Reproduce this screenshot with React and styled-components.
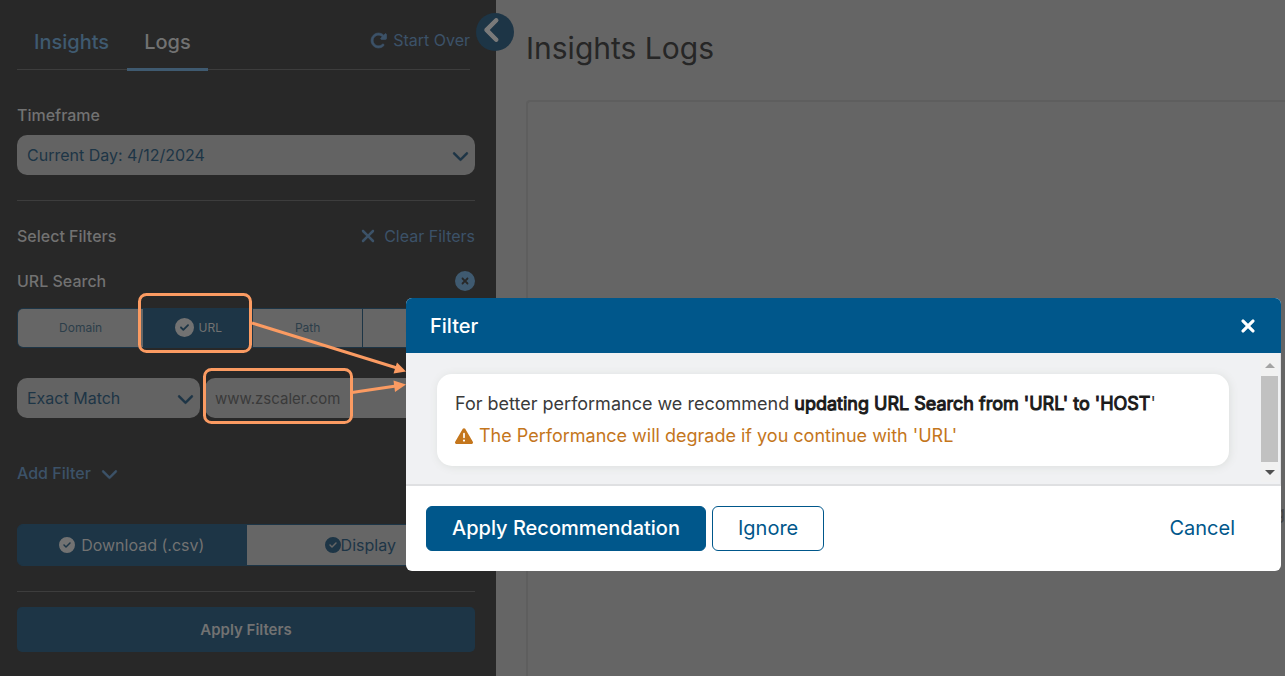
import React, { useState } from 'react';
import styled, { createGlobalStyle } from 'styled-components';
import {
  FaChevronDown,
  FaChevronLeft,
  FaCircleCheck,
  FaCircleXmark,
  FaRotateRight,
  FaTriangleExclamation,
  FaXmark,
} from 'react-icons/fa6';

const GlobalStyle = createGlobalStyle`
  * {
    box-sizing: border-box;
  }
  body {
    margin: 0;
    font-family: Inter, "Liberation Sans", sans-serif;
    background: #656565;
  }
  button, input, select {
    font: inherit;
    margin: 0;
  }
  button {
    cursor: pointer;
  }
`;

const Page = styled.div`
  position: relative;
  display: flex;
  min-height: 100vh;
  overflow: hidden;
`;

const Sidebar = styled.aside`
  position: relative;
  flex: 0 0 496px;
  padding: 0 21px 24px 17px;
  background: #282828;
  color: #727272;
  font-size: 16px;
`;

const Header = styled.header`
  display: flex;
  align-items: flex-end;
  justify-content: space-between;
  height: 70px;
  margin-right: 5px;
  border-bottom: 1px solid #3d3d3d;
`;

const Tabs = styled.nav`
  display: flex;
  gap: 1px;
  margin-bottom: -2px;
`;

const Tab = styled.button`
  height: 44px;
  padding: 0 17px 10px;
  border: 0;
  border-bottom: 3px solid ${({ $active }) => ($active ? '#3f5a70' : 'transparent')};
  background: none;
  color: ${({ $active }) => ($active ? '#727272' : '#3f5a70')};
  font-size: 20px;
  font-weight: 500;
  line-height: 31px;
`;

const TextButton = styled.button`
  display: flex;
  align-items: center;
  gap: 6px;
  padding: 0;
  border: 0;
  background: none;
  color: #3c5268;
  font-size: 16px;
  font-weight: ${({ $strong }) => ($strong ? 500 : 400)};
  line-height: 20px;
`;

const StartOver = styled(TextButton)`
  margin-bottom: 19px;
`;

const CollapseButton = styled.button`
  position: absolute;
  top: 13px;
  right: -18px;
  display: flex;
  align-items: center;
  justify-content: center;
  width: 38px;
  height: 38px;
  padding: 0 4px 4px 0;
  border: 0;
  border-radius: 50%;
  background: #1d3546;
  color: #7a7a7a;
`;

const BoldChevronLeft = styled(FaChevronLeft)`
  stroke: currentColor;
  stroke-width: 24px;
`;

const BoldRotate = styled(FaRotateRight)`
  stroke: currentColor;
  stroke-width: 20px;
`;

const BoldChevron = styled(FaChevronDown)`
  stroke: currentColor;
  stroke-width: 10px;
`;

const BoldX = styled(FaXmark)`
  stroke: currentColor;
  stroke-width: 20px;
`;

const Field = styled.div`
  display: flex;
  flex-direction: column;
  gap: 10px;
  margin-top: 35px;
`;

const Label = styled.label`
  font-weight: 500;
  line-height: 20px;
`;

const SelectBox = styled.div`
  display: grid;
  flex: ${({ $flex }) => $flex || 'none'};
  align-items: center;
  height: 40px;
  border-radius: 10px;
  background: #636363;
  color: #1d3546;
  & > * {
    grid-area: 1 / 1;
  }
  & svg {
    justify-self: end;
    margin-right: 6px;
    pointer-events: none;
  }
`;

const Select = styled.select`
  width: 100%;
  height: 40px;
  padding: 0 10px;
  border: 0;
  background: none;
  color: inherit;
  appearance: none;
`;

const TextInput = styled.input`
  flex: 1;
  min-width: 0;
  height: 40px;
  padding: 0 10px;
  border: 0;
  border-radius: 10px;
  background: #636363;
  color: #3a3a3a;
  font-size: 15px;
`;

const Divider = styled.hr`
  width: 100%;
  height: 1px;
  margin: ${({ $top }) => $top}px 0 0;
  border: 0;
  background: #3d3d3d;
`;

const Row = styled.div`
  display: flex;
  align-items: center;
  justify-content: space-between;
  gap: 5px;
  margin-top: ${({ $top }) => $top}px;
`;

const Heading = styled.h2`
  margin: 0;
  font-size: 16px;
  font-weight: 500;
  line-height: 20px;
`;

const RoundButton = styled.button`
  display: flex;
  padding: 0;
  border: 0;
  border-radius: 50%;
  background: none;
  color: #3f5a70;
`;

const Segments = styled.div`
  display: flex;
  height: ${({ $height }) => $height}px;
  margin-top: ${({ $top }) => $top}px;
  overflow: hidden;
  border: 1px solid #1d3546;
  border-radius: 6px;
  background: #1d3546;
  font-size: ${({ $size }) => $size}px;
`;

const Segment = styled.button`
  display: flex;
  flex: ${({ $grow }) => $grow || 1} 1 0;
  align-items: center;
  justify-content: center;
  gap: ${({ $gap }) => $gap || 0}px;
  padding: 0;
  border: 0;
  background: ${({ $active }) => ($active ? '#1d3546' : '#666')};
  color: ${({ $active }) => ($active ? '#727272' : '#1d3546')};
  & + & {
    border-left: 1px solid #1d3546;
  }
`;

const PartSegment = styled(Segment)`
  padding-bottom: 2px;
  color: ${({ $active }) => ($active ? '#727272' : '#2c3e4a')};
`;

const AddFilter = styled(TextButton)`
  gap: 10px;
  margin-top: 45px;
`;

const ApplyButton = styled.button`
  width: 100%;
  height: 45px;
  margin-top: 15px;
  border: 0;
  border-radius: 5px;
  background: #1d3546;
  color: #727272;
  font-size: 15px;
  font-weight: 600;
`;

const Main = styled.main`
  display: flex;
  flex: 1;
  flex-direction: column;
  min-width: 0;
  padding-left: 30px;
  background: #656565;
  color: #262626;
`;

const Title = styled.h1`
  margin: 28px 0 32px;
  font-size: 30px;
  font-weight: 400;
  line-height: 40px;
`;

const Panel = styled.section`
  display: flex;
  flex: 1;
  justify-content: flex-end;
  padding-top: 400px;
  border: 2px solid #5e5e5e;
  border-width: 2px 0 0 2px;
  border-radius: 4px 0 0 0;
  color: #444;
  font-size: 18px;
`;

const Annotations = styled.svg`
  position: absolute;
  top: 0;
  left: 0;
  pointer-events: none;
`;

const Dialog = styled.section`
  position: absolute;
  top: 298px;
  right: 4px;
  left: 406px;
  overflow: hidden;
  border-radius: 6px;
  background: #fff;
`;

const DialogHeader = styled.header`
  display: flex;
  align-items: center;
  justify-content: space-between;
  height: 55px;
  padding: 0 23px 0 24px;
  background: #00578b;
  color: #fff;
`;

const DialogTitle = styled.h2`
  margin: 0;
  font-size: 20px;
  font-weight: 500;
`;

const CloseButton = styled.button`
  display: flex;
  padding: 0;
  border: 0;
  background: none;
  color: #fff;
`;

const DialogBody = styled.div`
  display: flex;
  padding: 4px 2px 2px 1px;
  border: 1px solid #dfe0e2;
  border-width: 0 1px 2px 0;
  background: #f0f1f3;
`;

const Card = styled.div`
  flex: 1;
  margin: 17px 32px 16px 30px;
  padding: 14px 18px;
  border-radius: 15px;
  background: #fff;
  box-shadow: 1px 1px 8px #dcdfdd;
  color: #3a3a3a;
  font-size: 18px;
  line-height: 32px;
  & p {
    margin: 0;
  }
  & strong {
    color: #1a1a1a;
    font-weight: 400;
    -webkit-text-stroke: 1px #1a1a1a;
  }
`;

const Warning = styled.p`
  display: flex;
  align-items: center;
  gap: 6px;
  color: #c4761c;
`;

const ScrollTrack = styled.div`
  display: flex;
  flex: 0 0 17px;
  flex-direction: column;
  align-items: center;
  gap: 8px;
  padding: 6px 0 7px;
  background: #f1f1f1;
`;

const ScrollArrow = styled.span`
  border: 5px solid transparent;
  border-width: ${({ $down }) => ($down ? '5px 5px 0' : '0 5px 5px')};
  border-top-color: #505050;
  border-bottom-color: #a3a3a3;
`;

const ScrollThumb = styled.span`
  flex: 1;
  width: 100%;
  background: #c1c1c1;
`;

const DialogFooter = styled.footer`
  display: flex;
  align-items: center;
  gap: 6px;
  padding: 20px;
`;

const DialogButton = styled.button`
  height: 45px;
  padding: 0 25px 2px;
  border: 1px solid #00578b;
  border-radius: 6px;
  background: ${({ $primary }) => ($primary ? '#00578b' : '#fff')};
  color: ${({ $primary }) => ($primary ? '#fff' : '#00578b')};
  font-size: 20px;
  font-weight: ${({ $primary }) => ($primary ? 500 : 400)};
`;

const CancelButton = styled(DialogButton)`
  margin-left: auto;
  border-color: transparent;
`;

const SEARCH_PARTS = [
  { name: 'Domain', grow: 126 },
  { name: 'URL', grow: 109 },
  { name: 'Path', grow: 109 },
  { name: 'Host', grow: 112 },
];

const FilterDialog = () => (
  <Dialog role="dialog" aria-labelledby="dialog-title">
    <DialogHeader>
      <DialogTitle id="dialog-title">Filter</DialogTitle>
      <CloseButton aria-label="Close">
        <BoldX size={20} />
      </CloseButton>
    </DialogHeader>
    <DialogBody>
      <Card>
        <p>
          For better performance we recommend{' '}
          <strong>updating URL Search from 'URL' to 'HOST</strong>'
        </p>
        <Warning>
          <FaTriangleExclamation size={18} />
          The Performance will degrade if you continue with 'URL'
        </Warning>
      </Card>
      <ScrollTrack aria-hidden="true">
        <ScrollArrow />
        <ScrollThumb />
        <ScrollArrow $down />
      </ScrollTrack>
    </DialogBody>
    <DialogFooter>
      <DialogButton $primary>Apply Recommendation</DialogButton>
      <DialogButton>Ignore</DialogButton>
      <CancelButton>Cancel</CancelButton>
    </DialogFooter>
  </Dialog>
);

const Callouts = () => (
  <Annotations width="407" height="430" aria-hidden="true">
    <g fill="none" stroke="#fb9b62" strokeWidth="3">
      <rect x="139.5" y="294.5" width="111" height="57" rx="7" />
      <rect x="204.5" y="369.5" width="147" height="53" rx="7" />
      <path d="M252 323L397 368" />
      <path d="M352 392.5L396 386" />
    </g>
    <g fill="#fb9b62">
      <path d="M406 371.5L393.5 373.5L397 362.5Z" />
      <path d="M406 384.5L393.5 380.5L395 392Z" />
    </g>
  </Annotations>
);

const App = () => {
  const [url, setUrl] = useState('www.zscaler.com');
  const [part, setPart] = useState('URL');

  return (
    <Page>
      <GlobalStyle />
      <Sidebar>
        <Header>
          <Tabs>
            <Tab>Insights</Tab>
            <Tab $active>Logs</Tab>
          </Tabs>
          <StartOver>
            <BoldRotate size={17} />
            Start Over
          </StartOver>
        </Header>
        <CollapseButton aria-label="Collapse filters">
          <BoldChevronLeft size={26} />
        </CollapseButton>

        <Field>
          <Label htmlFor="timeframe">Timeframe</Label>
          <SelectBox>
            <Select id="timeframe">
              <option>Current Day: 4/12/2024</option>
            </Select>
            <BoldChevron size={17} />
          </SelectBox>
        </Field>
        <Divider $top={25} />

        <Row $top={25}>
          <Heading>Select Filters</Heading>
          <TextButton>
            <FaXmark size={20} />
            Clear Filters
          </TextButton>
        </Row>
        <Row $top={25}>
          <Heading>URL Search</Heading>
          <RoundButton aria-label="Remove URL Search">
            <FaCircleXmark size={20} />
          </RoundButton>
        </Row>
        <Segments $top={17} $height={40} $size={12}>
          {SEARCH_PARTS.map(({ name, grow }) => (
            <PartSegment
              key={name}
              $grow={grow}
              $gap={5}
              $active={name === part}
              onClick={() => setPart(name)}
            >
              {name === part && <FaCircleCheck size={19} />}
              {name}
            </PartSegment>
          ))}
        </Segments>
        <Row $top={30}>
          <SelectBox $flex="0 0 183px">
            <Select aria-label="Match type">
              <option>Exact Match</option>
            </Select>
            <BoldChevron size={17} />
          </SelectBox>
          <TextInput
            aria-label="URL"
            value={url}
            onChange={(e) => setUrl(e.target.value)}
          />
        </Row>
        <AddFilter $strong>
          Add Filter
          <BoldChevron size={17} />
        </AddFilter>

        <Segments $top={41} $height={42} $size={16}>
          <Segment $active $gap={6}>
            <FaCircleCheck size={16} />
            Download (.csv)
          </Segment>
          <Segment>
            <FaCircleCheck size={16} />
            Display
          </Segment>
        </Segments>
        <Divider $top={25} />
        <ApplyButton>Apply Filters</ApplyButton>
      </Sidebar>

      <Main>
        <Title>Insights Logs</Title>
        <Panel>g</Panel>
      </Main>

      <Callouts />
      <FilterDialog />
    </Page>
  );
};

export default App;
